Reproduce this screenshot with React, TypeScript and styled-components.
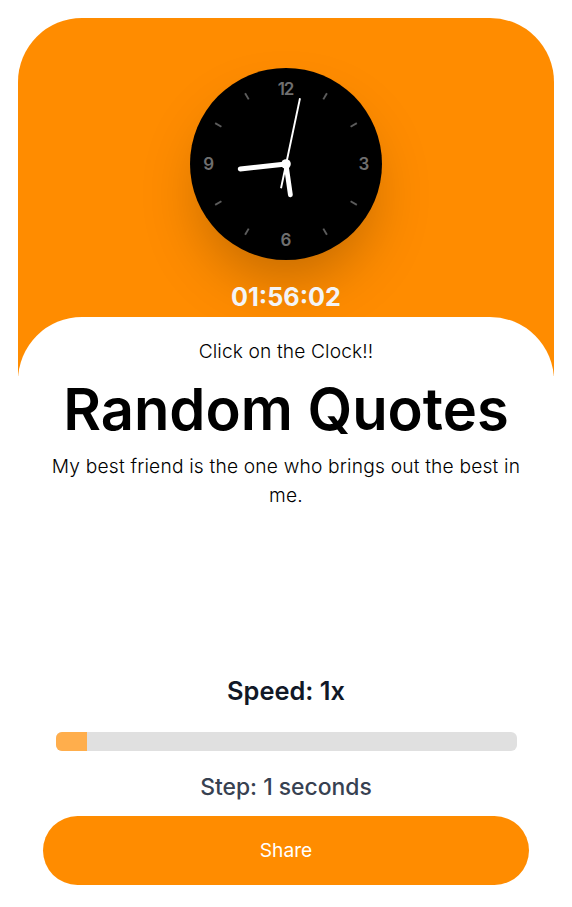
import React from "react";
import styled, { createGlobalStyle } from "styled-components";

const Global = createGlobalStyle`
  * { box-sizing: border-box; }
  body { margin: 0; background: #fff; font-family: Inter, sans-serif; }
`;
const Card = styled.main`
  width: 536px;
  height: 867px;
  margin: 18px 18px 0;
  display: flex;
  flex-direction: column;
`;
const Top = styled.header`
  height: 358px;
  flex: none;
  margin-bottom: -59px;
  padding-top: 50px;
  border-radius: 64px 64px 0 0;
  background: #ff8c00;
  display: flex;
  flex-direction: column;
  align-items: center;
`;
const Clock = styled.div`
  width: 192px;
  height: 192px;
  border-radius: 50%;
  background: #000;
  box-shadow: 0 30px 60px -12px rgba(0, 0, 0, 0.25);
`;
const Face = styled.svg`
  display: block;
`;
const Numeral = styled.text<{ $tracking?: number }>`
  font: 600 17px Inter, sans-serif;
  letter-spacing: ${(p) => p.$tracking ?? 0}px;
  fill: #6f6f6f;
  text-anchor: middle;
`;
const Time = styled.div`
  margin-top: 22px;
  font-size: 25.2px;
  line-height: 30px;
  font-weight: 700;
  color: #f3f4f6;
`;
const Panel = styled.section`
  flex: 1;
  background: #fff;
  border-radius: 64px 64px 0 0;
  padding: 20px 25px 0;
  display: flex;
  flex-direction: column;
  text-align: center;
`;
const Hint = styled.p`
  margin: 0;
  font-size: 19.2px;
  line-height: 29px;
  font-weight: 300;
  letter-spacing: 0.12px;
`;
const Title = styled.h1`
  margin: 7px 0;
  font-size: 57.9px;
  line-height: 72px;
  font-weight: 600;
`;
const Quote = styled.p`
  margin: 0;
  height: 221px;
  font-size: 19.2px;
  line-height: 29px;
  font-weight: 300;
  letter-spacing: 0.18px;
`;
const Speed = styled.div`
  font-size: 25.4px;
  line-height: 35px;
  font-weight: 600;
  color: #111827;
`;
const Track = styled.div`
  flex: none;
  margin: 24px 12px 0 13px;
  height: 19px;
  border-radius: 6px;
  background: #e0e0e0;
  overflow: hidden;
`;
const Fill = styled.div`
  width: 31px;
  height: 100%;
  background: #ffae4c;
`;
const Step = styled.div`
  margin-top: 20px;
  font-size: 22.9px;
  line-height: 32px;
  font-weight: 500;
  color: #374151;
`;
const Share = styled.button`
  flex: none;
  margin-top: 13px;
  padding: 0 0 2px;
  height: 69px;
  border: 0;
  border-radius: 35px;
  background: #ff8c00;
  color: #fff;
  font: 400 19.2px Inter, sans-serif;
`;

const tickAngles = [30, 60, 120, 150, 210, 240, 300, 330];

export default function App() {
  return (
    <>
      <Global />
      <Card>
        <Top>
          <Clock>
            <Face width="192" height="192" viewBox="0 0 192 192">
              {tickAngles.map((a) => (
                <path key={a} d="M96 14.2v7.2" stroke="#5c5c5c" strokeWidth="1.9" transform={`rotate(${a} 96 96)`} />
              ))}
              <Numeral x="95.5" y="26.8" $tracking={-1.1}>12</Numeral>
              <Numeral x="174" y="102.2">3</Numeral>
              <Numeral x="96" y="177.5">6</Numeral>
              <Numeral x="18.7" y="102.2">9</Numeral>
              <g stroke="#fff" strokeLinecap="round">
                <path d="M96 96 100.4 126.8" strokeWidth="4.8" />
                <path d="M96 96 50.2 101" strokeWidth="4.8" />
                <path d="M110 30.3 91 120.3" strokeWidth="1.9" strokeLinecap="butt" />
              </g>
              <circle cx="96" cy="96" r="4.8" fill="#fff" />
            </Face>
          </Clock>
          <Time>01:56:02</Time>
        </Top>
        <Panel>
          <Hint>Click on the Clock!!</Hint>
          <Title>Random Quotes</Title>
          <Quote>My best friend is the one who brings out the best in me.</Quote>
          <Speed>Speed: 1x</Speed>
          <Track><Fill /></Track>
          <Step>Step: 1 seconds</Step>
          <Share>Share</Share>
        </Panel>
      </Card>
    </>
  );
}
